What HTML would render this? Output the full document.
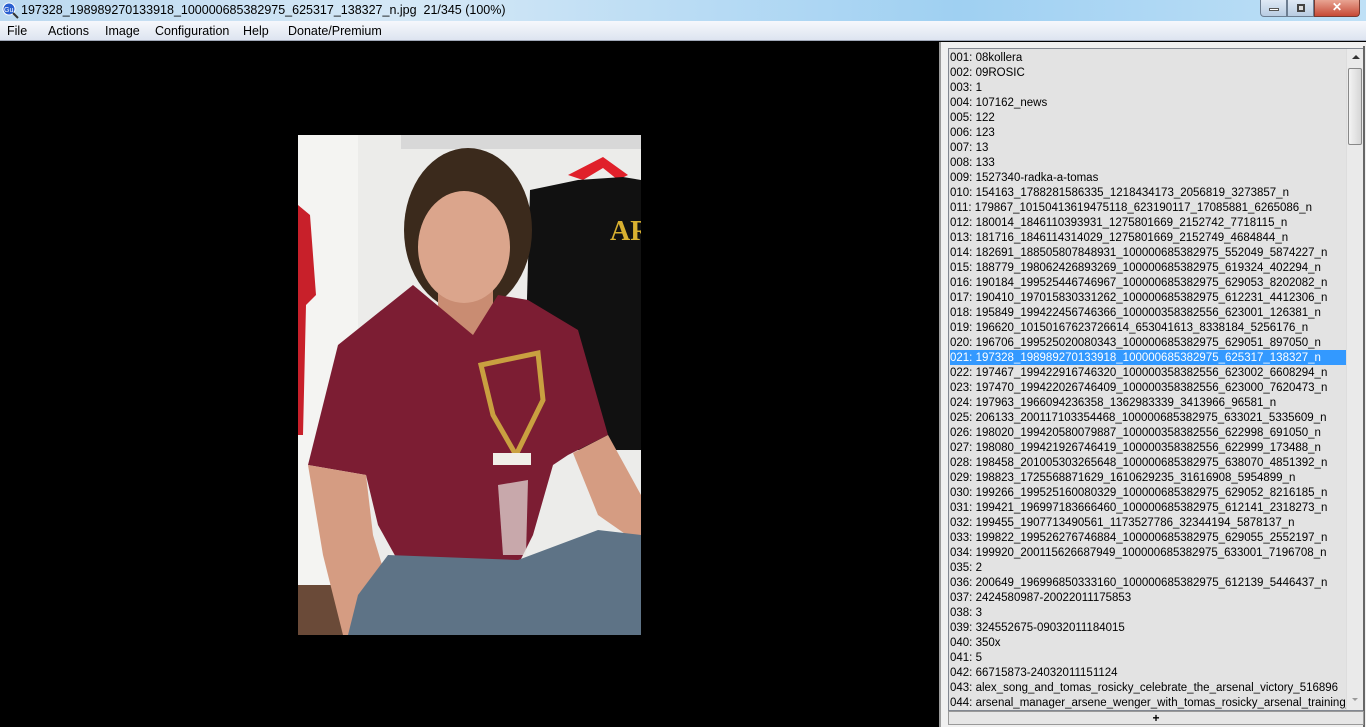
<!DOCTYPE html>
<html><head><style>
*{margin:0;padding:0;box-sizing:border-box}
body{width:1366px;height:727px;overflow:hidden;background:#000;font-family:"Liberation Sans",sans-serif;position:relative}
#title{position:absolute;left:0;top:0;width:1366px;height:21px;background:linear-gradient(90deg,#bcd9f0,#d5e8f6 30%,#9fd0f2 70%,#bfe0f6);}
#title .t{position:absolute;left:21px;top:3px;font-size:12.5px;color:#000}
#menu{position:absolute;left:0;top:21px;width:1366px;height:20px;background:linear-gradient(#f6f8fc,#dde4f0);border-bottom:1px solid #a0a8b8;font-size:12.5px}
#menu span{position:absolute;top:3px}
#panel{position:absolute;left:939px;top:42px;width:427px;height:685px;background:#f0f0f0;border-left:2px solid #9a9a9a}
#list{position:absolute;left:948px;top:48px;width:416px;height:663px;background:#e3e3e3;border:1px solid #828790;overflow:hidden}
.r{position:absolute;left:1px;height:15px;width:397px;font-size:11.5px;line-height:15px;color:#000;white-space:nowrap;overflow:hidden}
.sel{background:#3399ff;color:#fff}
#sb{position:absolute;left:1346px;top:49px;width:17px;height:661px;background:#eaeaea;border-left:1px solid #ddd}
#btn{position:absolute;left:948px;top:711px;width:416px;height:14px;background:#e6e6e6;border:1px solid #999;text-align:center;font-size:12px;line-height:12px;font-weight:bold}
</style></head><body>
<div id="title">
<svg style="position:absolute;left:2px;top:2px" width="17" height="17"><circle cx="7" cy="7" r="6" fill="#2a5fd0" stroke="#fff"/><text x="2" y="10" font-size="7" fill="#fff" font-family="Liberation Sans">Gu</text><line x1="11" y1="11" x2="16" y2="16" stroke="#333" stroke-width="2"/></svg>
<div class="t">197328_198989270133918_100000685382975_625317_138327_n.jpg&nbsp; 21/345 (100%)</div>
<div style="position:absolute;left:1260px;top:0;width:27px;height:17px;border:1px solid #6c7d91;border-top:none;border-radius:0 0 0 4px;background:linear-gradient(#dfe9f5,#b8cce2)"><div style="position:absolute;left:8px;top:8px;width:10px;height:3px;background:#fff;border:1px solid #555"></div></div>
<div style="position:absolute;left:1287px;top:0;width:27px;height:17px;border:1px solid #6c7d91;border-top:none;background:linear-gradient(#dfe9f5,#b8cce2)"><div style="position:absolute;left:9px;top:4px;width:8px;height:8px;border:2px solid #444;background:#ddd"></div></div>
<div style="position:absolute;left:1314px;top:0;width:46px;height:17px;border:1px solid #7a3a30;border-top:none;border-radius:0 0 4px 0;background:linear-gradient(#e8a493,#c74a36);color:#fff;text-align:center;font-weight:bold;font-size:12px;line-height:15px">✕</div>
</div>
<div id="menu">
<span style="left:7px">File</span><span style="left:48px">Actions</span><span style="left:105px">Image</span><span style="left:155px">Configuration</span><span style="left:243px">Help</span><span style="left:288px">Donate/Premium</span>
</div>

<svg style="position:absolute;left:298px;top:135px" width="343" height="500" viewBox="0 0 343 500">
<rect width="343" height="500" fill="#ececea"/>
<rect x="0" y="0" width="60" height="500" fill="#f4f4f2"/>
<rect x="103" y="0" width="240" height="14" fill="#d8d8d8"/>
<path d="M270 40 L305 22 L330 40 L320 45 L305 33 L285 45Z" fill="#e0202a"/>
<path d="M232 55 L280 45 L325 42 L343 45 L343 315 L240 315 L228 200Z" fill="#111"/>
<text x="312" y="105" font-size="28" font-weight="bold" fill="#d8b030" font-family="Liberation Serif">AR</text>
<path d="M0 70 L12 80 L18 160 L8 170 L5 300 L0 300Z" fill="#c8202a"/>
<rect x="0" y="450" width="60" height="50" fill="#6a4a38"/>
<ellipse cx="170" cy="95" rx="64" ry="82" fill="#3b2a1c"/>
<rect x="140" y="140" width="55" height="60" fill="#c98c72"/>
<ellipse cx="166" cy="112" rx="46" ry="56" fill="#dba58c"/>
<path d="M40 210 L115 150 L145 175 L175 200 L200 160 L230 165 L280 195 L310 300 L270 320 L255 330 L235 400 L220 430 L105 435 L80 390 L68 340 L10 330Z" fill="#7c1d33"/>
<path d="M183 230 L240 218 L245 265 L218 320 L195 280Z" fill="none" stroke="#c9a040" stroke-width="5"/>
<rect x="195" y="318" width="38" height="12" fill="#f0eee8"/>
<path d="M200 350 L230 345 L228 420 L205 420Z" fill="#e8e4de" opacity=".7"/>
<path d="M10 330 L68 340 L75 400 L90 450 L70 500 L45 500 L25 420Z" fill="#d59c82"/>
<path d="M275 318 L310 300 L343 360 L343 410 L300 380Z" fill="#d59c82"/>
<path d="M90 420 L220 425 L300 395 L343 400 L343 500 L50 500 L60 460Z" fill="#5e7386"/>
</svg>

<div id="panel"></div>
<div id="list">
<div class="r" style="top:2px">001: 08kollera</div>
<div class="r" style="top:17px">002: 09ROSIC</div>
<div class="r" style="top:32px">003: 1</div>
<div class="r" style="top:47px">004: 107162_news</div>
<div class="r" style="top:62px">005: 122</div>
<div class="r" style="top:77px">006: 123</div>
<div class="r" style="top:92px">007: 13</div>
<div class="r" style="top:107px">008: 133</div>
<div class="r" style="top:122px">009: 1527340-radka-a-tomas</div>
<div class="r" style="top:137px">010: 154163_1788281586335_1218434173_2056819_3273857_n</div>
<div class="r" style="top:152px">011: 179867_10150413619475118_623190117_17085881_6265086_n</div>
<div class="r" style="top:167px">012: 180014_1846110393931_1275801669_2152742_7718115_n</div>
<div class="r" style="top:182px">013: 181716_1846114314029_1275801669_2152749_4684844_n</div>
<div class="r" style="top:197px">014: 182691_188505807848931_100000685382975_552049_5874227_n</div>
<div class="r" style="top:212px">015: 188779_198062426893269_100000685382975_619324_402294_n</div>
<div class="r" style="top:227px">016: 190184_199525446746967_100000685382975_629053_8202082_n</div>
<div class="r" style="top:242px">017: 190410_197015830331262_100000685382975_612231_4412306_n</div>
<div class="r" style="top:257px">018: 195849_199422456746366_100000358382556_623001_126381_n</div>
<div class="r" style="top:272px">019: 196620_10150167623726614_653041613_8338184_5256176_n</div>
<div class="r" style="top:287px">020: 196706_199525020080343_100000685382975_629051_897050_n</div>
<div class="r sel" style="top:301px;line-height:16px">021: 197328_198989270133918_100000685382975_625317_138327_n</div>
<div class="r" style="top:317px">022: 197467_199422916746320_100000358382556_623002_6608294_n</div>
<div class="r" style="top:332px">023: 197470_199422026746409_100000358382556_623000_7620473_n</div>
<div class="r" style="top:347px">024: 197963_1966094236358_1362983339_3413966_96581_n</div>
<div class="r" style="top:362px">025: 206133_200117103354468_100000685382975_633021_5335609_n</div>
<div class="r" style="top:377px">026: 198020_199420580079887_100000358382556_622998_691050_n</div>
<div class="r" style="top:392px">027: 198080_199421926746419_100000358382556_622999_173488_n</div>
<div class="r" style="top:407px">028: 198458_201005303265648_100000685382975_638070_4851392_n</div>
<div class="r" style="top:422px">029: 198823_1725568871629_1610629235_31616908_5954899_n</div>
<div class="r" style="top:437px">030: 199266_199525160080329_100000685382975_629052_8216185_n</div>
<div class="r" style="top:452px">031: 199421_196997183666460_100000685382975_612141_2318273_n</div>
<div class="r" style="top:467px">032: 199455_1907713490561_1173527786_32344194_5878137_n</div>
<div class="r" style="top:482px">033: 199822_199526276746884_100000685382975_629055_2552197_n</div>
<div class="r" style="top:497px">034: 199920_200115626687949_100000685382975_633001_7196708_n</div>
<div class="r" style="top:512px">035: 2</div>
<div class="r" style="top:527px">036: 200649_196996850333160_100000685382975_612139_5446437_n</div>
<div class="r" style="top:542px">037: 2424580987-20022011175853</div>
<div class="r" style="top:557px">038: 3</div>
<div class="r" style="top:572px">039: 324552675-09032011184015</div>
<div class="r" style="top:587px">040: 350x</div>
<div class="r" style="top:602px">041: 5</div>
<div class="r" style="top:617px">042: 66715873-24032011151124</div>
<div class="r" style="top:632px">043: alex_song_and_tomas_rosicky_celebrate_the_arsenal_victory_516896</div>
<div class="r" style="top:647px">044: arsenal_manager_arsene_wenger_with_tomas_rosicky_arsenal_training_</div>
</div>
<div id="sb">
<div style="position:absolute;left:5px;top:6px;border:4px solid transparent;border-bottom:4px solid #333;border-top:none;width:0"></div>
<div style="position:absolute;left:1px;top:19px;width:14px;height:77px;border:1px solid #888;border-radius:2px;background:linear-gradient(90deg,#f3f3f3,#d6d6d6)"></div>
<div style="position:absolute;left:5px;top:649px;border:3px solid transparent;border-top:3px solid #999;border-bottom:none;width:0"></div>
</div>
<div style="position:absolute;left:1363px;top:46px;width:2px;height:681px;background:#666"></div>
<div id="btn">+</div>
</body></html>
